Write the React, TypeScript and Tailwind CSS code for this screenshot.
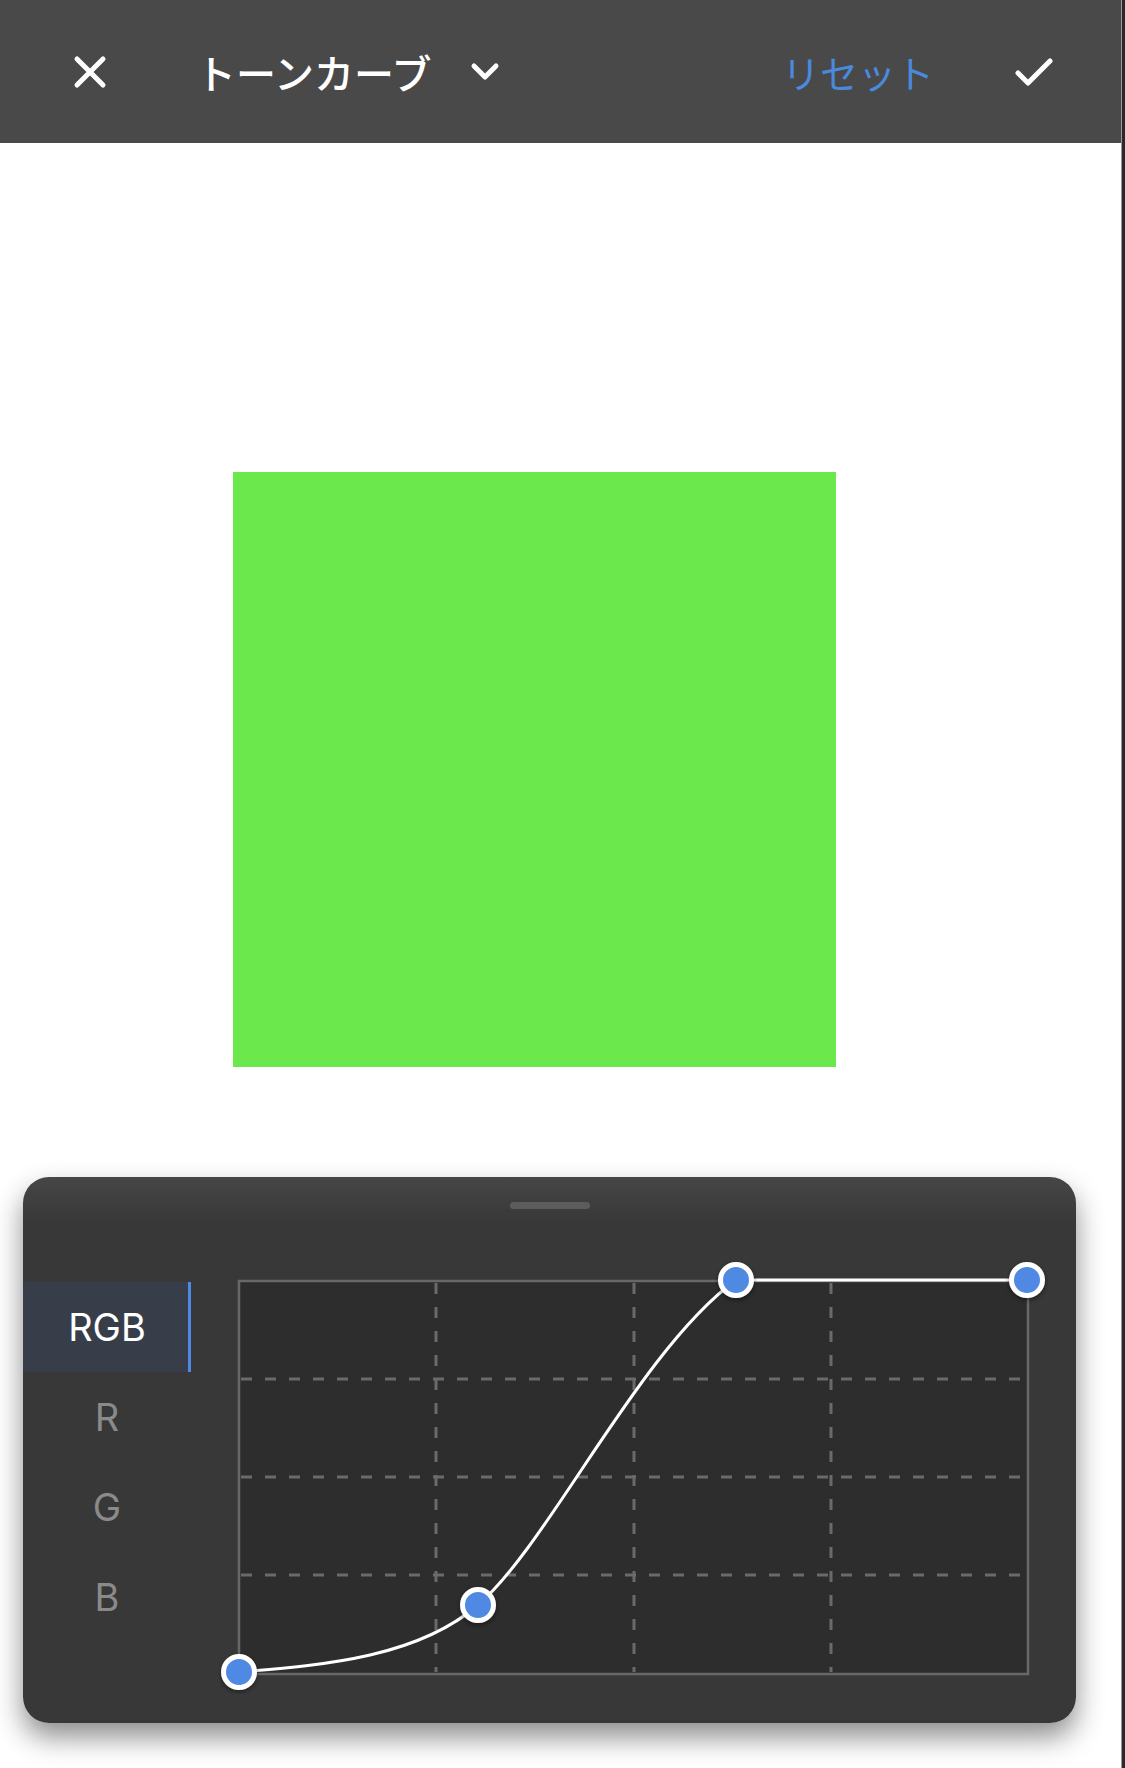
import React from "react";

const jp = { fontFamily: '"Noto Sans CJK JP", "Noto Sans", sans-serif' };
const latin = { fontFamily: 'Inter, "Liberation Sans", sans-serif' };

function Graph() {
  const vx = [217, 415, 612];
  const hy = [118, 216, 314];
  const pts: [number, number][] = [
    [20, 411],
    [259, 344],
    [517, 19],
    [808, 19],
  ];
  return (
    <svg width={829} height={433} viewBox="0 0 829 433" className="block">
      <defs>
        <filter id="ps" x="-50%" y="-50%" width="200%" height="200%">
          <feDropShadow dx="0" dy="2" stdDeviation="2.5" floodColor="#000" floodOpacity="0.45" />
        </filter>
      </defs>
      <rect x={20} y={20} width={789} height={393} fill="#2d2d2d" stroke="#686868" strokeWidth={2.5} />
      {vx.map((x) => (
        <line key={x} x1={x} y1={22} x2={x} y2={411} stroke="#6a6a6a" strokeWidth={3} strokeDasharray="11 13" />
      ))}
      {hy.map((y) => (
        <line key={y} x1={22} y1={y} x2={807} y2={y} stroke="#6a6a6a" strokeWidth={3} strokeDasharray="11 13" />
      ))}
      <path
        d="M20,411 C110,404 200,395 259,344 C330,283 420,90 517,19 L808,19"
        fill="none"
        stroke="#fff"
        strokeWidth={3}
      />
      {pts.map(([x, y]) => (
        <circle key={x} cx={x} cy={y} r={15.5} fill="#4f89e4" stroke="#fff" strokeWidth={5} filter="url(#ps)" />
      ))}
    </svg>
  );
}

export default function App() {
  return (
    <div className="w-[1125px] h-[1768px] flex overflow-hidden bg-white">
      <div className="flex-1 flex flex-col">
        <header className="h-[143px] bg-[#494949] flex items-center shrink-0">
          <svg width="34" height="34" viewBox="0 0 34 34" className="ml-[73px] shrink-0">
            <path d="M4 4 L30 30 M30 4 L4 30" stroke="#fff" strokeWidth="5" strokeLinecap="round" />
          </svg>
          <span className="ml-[89px] text-[40px] leading-none font-medium text-white" style={jp}>
            トーンカーブ
          </span>
          <svg width="30" height="20" viewBox="0 0 30 20" className="ml-[38px] shrink-0">
            <path d="M4 4 L15 15 L26 4" fill="none" stroke="#fff" strokeWidth="5" strokeLinecap="round" strokeLinejoin="round" />
          </svg>
          <div className="flex-1" />
          <span className="text-[38px] leading-none text-[#4a8ade]" style={jp}>
            リセット
          </span>
          <svg width="40" height="32" viewBox="0 0 40 32" className="ml-[80px] mr-[67px] shrink-0">
            <path d="M4 17 L14 27 L36 5" fill="none" stroke="#fff" strokeWidth="5" strokeLinecap="round" strokeLinejoin="round" />
          </svg>
        </header>
        <div className="flex-1 flex flex-col">
          <div className="mt-[329px] ml-[233px] w-[603px] h-[595px] bg-[#6be84b]" />
          <div className="mt-[110px] ml-[23px] w-[1053px] h-[546px] rounded-[26px] bg-[linear-gradient(#464646,#383838_45px)] shadow-[0_14px_28px_rgba(0,0,0,0.45)] flex flex-col">
            <div className="mt-[25px] mx-auto w-[80px] h-[7px] rounded-full bg-[#5c5c5c]" />
            <div className="mt-[52px] flex items-start">
              <div className="mt-[21px] w-[168px] flex flex-col" style={latin}>
                <div className="h-[90px] flex items-center justify-center bg-[#373e49] border-r-[3px] border-[#4f89e4] text-white text-[38px] pl-[3px]">
                  RGB
                </div>
                <div className="h-[90px] flex items-center justify-center text-[#8a8a8a] text-[38px]">R</div>
                <div className="h-[90px] flex items-center justify-center text-[#8a8a8a] text-[38px]">G</div>
                <div className="h-[90px] flex items-center justify-center text-[#8a8a8a] text-[38px]">B</div>
              </div>
              <div className="ml-[28px]">
                <Graph />
              </div>
            </div>
          </div>
        </div>
      </div>
      <div className="w-[4px] bg-[#2a2a2a] border-l border-[#9a9a9a]" />
    </div>
  );
}
